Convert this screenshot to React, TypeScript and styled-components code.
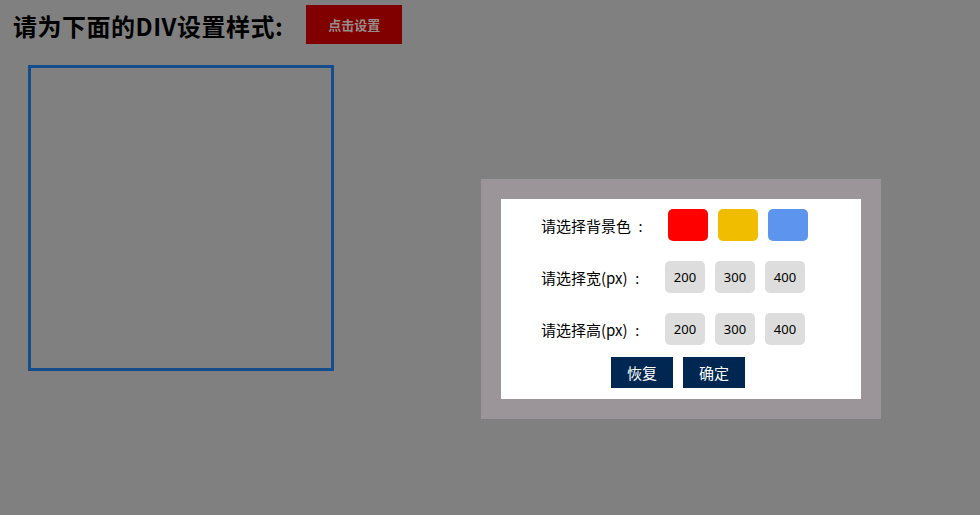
import React from "react";
import styled, { createGlobalStyle } from "styled-components";

const Global = createGlobalStyle`
  html, body { margin: 0; padding: 0; background: #808080; }
  body { font-family: "Noto Sans CJK SC", "Noto Sans", sans-serif; }
  #root { min-height: 515px; }
`;

const Page = styled.div`
  position: relative;
  width: 980px;
  height: 515px;
  background: #808080;
  overflow: hidden;
`;

const TopBar = styled.div`
  display: flex;
  align-items: center;
  gap: 23px;
  padding: 5px 0 0 13px;
  height: 39px;
`;

const Heading = styled.h2`
  margin: 0;
  font-family: "Noto Sans CJK SC", sans-serif;
  font-size: 24px;
  font-weight: 700;
  line-height: 1;
  letter-spacing: 0.5px;
  color: #000;
  padding-top: 3px;
`;

const SetButton = styled.button`
  width: 96px;
  height: 39px;
  border: none;
  background: #800000;
  color: #968c8c;
  font-family: "Noto Sans CJK SC", sans-serif;
  font-size: 13px;
  font-weight: 700;
  padding: 0;
`;

const TargetBox = styled.div`
  width: 300px;
  height: 300px;
  margin: 21px 0 0 28px;
  border: 3px solid #134d8b;
`;

const Dialog = styled.div`
  position: absolute;
  left: 481px;
  top: 179px;
  width: 360px;
  height: 200px;
  padding: 20px;
  background: #9b9499;
`;

const Panel = styled.div`
  width: 360px;
  height: 200px;
  background: #fff;
  box-sizing: border-box;
  padding: 10px 0 0 40px;
  display: flex;
  flex-direction: column;
  gap: 20px;
`;

const Row = styled.div`
  display: flex;
  align-items: center;
  height: 32px;
`;

const Label = styled.span<{ $w: number }>`
  width: ${(p) => p.$w}px;
  font-size: 15px;
  color: #000;
  white-space: nowrap;
`;

const Colon = styled.span`
  display: inline-block;
  width: 15px;
  text-align: center;
  margin-left: 2px;
  font-family: "Noto Sans", sans-serif;
`;

const Options = styled.div`
  display: flex;
  gap: 10px;
`;

const Swatch = styled.div<{ $c: string }>`
  width: 40px;
  height: 32px;
  border-radius: 5px;
  background: ${(p) => p.$c};
`;

const SizeButton = styled.div`
  width: 40px;
  height: 32px;
  border-radius: 5px;
  background: #dddddd;
  color: #000;
  font-family: "Noto Sans", sans-serif;
  font-size: 13px;
  display: flex;
  align-items: center;
  justify-content: center;
`;

const Footer = styled.div`
  display: flex;
  gap: 10px;
  padding-left: 70px;
  margin-top: -8px;
`;

const ActionButton = styled.div`
  width: 62px;
  height: 31px;
  background: #002752;
  color: #fff;
  font-size: 15px;
  display: flex;
  align-items: center;
  justify-content: center;
`;

export default function App() {
  return (
    <Page>
      <Global />
      <TopBar>
        <Heading>请为下面的DIV设置样式:</Heading>
        <SetButton>点击设置</SetButton>
      </TopBar>
      <TargetBox />
      <Dialog>
        <Panel>
          <Row>
            <Label $w={127}>
              请选择背景色<Colon>:</Colon>
            </Label>
            <Options>
              <Swatch $c="#ff0000" />
              <Swatch $c="#f0bd00" />
              <Swatch $c="#5d95ee" />
            </Options>
          </Row>
          <Row>
            <Label $w={124}>
              请选择宽(px)<Colon>:</Colon>
            </Label>
            <Options>
              <SizeButton>200</SizeButton>
              <SizeButton>300</SizeButton>
              <SizeButton>400</SizeButton>
            </Options>
          </Row>
          <Row>
            <Label $w={124}>
              请选择高(px)<Colon>:</Colon>
            </Label>
            <Options>
              <SizeButton>200</SizeButton>
              <SizeButton>300</SizeButton>
              <SizeButton>400</SizeButton>
            </Options>
          </Row>
          <Footer>
            <ActionButton>恢复</ActionButton>
            <ActionButton>确定</ActionButton>
          </Footer>
        </Panel>
      </Dialog>
    </Page>
  );
}
